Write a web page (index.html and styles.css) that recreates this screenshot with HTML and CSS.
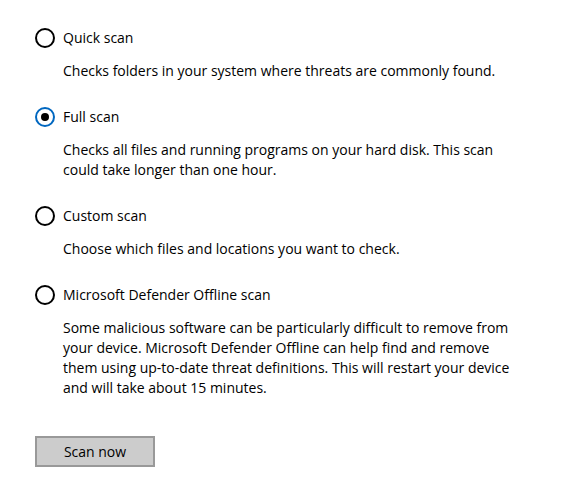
FILE: index.html
```html
<!DOCTYPE html>
<html lang="en">
<head>
    <meta charset="UTF-8">
    <title>Scan options</title>
    <link rel="stylesheet" href="styles.css">
</head>
<body>
    <div class="scan-options">
        <label class="option">
            <span class="radio"></span>
            <span class="option-title">Quick scan</span>
        </label>
        <p class="option-desc">Checks folders in your system where threats are commonly found.</p>

        <label class="option">
            <span class="radio checked"></span>
            <span class="option-title">Full scan</span>
        </label>
        <p class="option-desc">Checks all files and running programs on your hard disk. This scan could take longer than one hour.</p>

        <label class="option">
            <span class="radio"></span>
            <span class="option-title">Custom scan</span>
        </label>
        <p class="option-desc">Choose which files and locations you want to check.</p>

        <label class="option">
            <span class="radio"></span>
            <span class="option-title">Microsoft Defender Offline scan</span>
        </label>
        <p class="option-desc">Some malicious software can be particularly difficult to remove from your device. Microsoft Defender Offline can help find and remove them using up-to-date threat definitions. This will restart your device and will take about 15 minutes.</p>

        <button class="scan-btn">Scan now</button>
    </div>
</body>
</html>
```

FILE: styles.css
```css
body {
    margin: 0;
    background: #fff;
    color: #000;
    font-family: "Open Sans", "Noto Sans", sans-serif;
    font-size: 14px;
}
.scan-options {
    padding: 27px 0 0 35px;
}
.option {
    display: flex;
    align-items: center;
    gap: 8px;
    height: 22px;
}
.radio {
    box-sizing: border-box;
    width: 20px;
    height: 20px;
    border: 2px solid #000;
    border-radius: 50%;
    display: flex;
    align-items: center;
    justify-content: center;
}
.radio.checked { border-color: #0067c0; }
.radio.checked::after {
    content: "";
    width: 8px;
    height: 8px;
    border-radius: 50%;
    background: #000;
}
.option-title { line-height: 22px; }
.option-desc {
    margin: 12px 0 25px 28px;
    max-width: 452px;
    line-height: 20px;
    color: #000;
}
.scan-btn {
    margin-top: 13px;
    width: 120px;
    height: 31px;
    background: #ccc;
    border: 2px solid #999;
    font-family: inherit;
    font-size: 14px;
    color: #000;
}
```
